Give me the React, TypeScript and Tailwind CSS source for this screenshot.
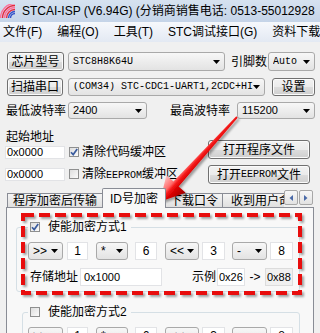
import React from "react";

function Caret() {
  return (
    <svg width="7" height="4" viewBox="0 0 7 4" className="shrink-0">
      <path d="M0 0H7L3.5 4Z" fill="#000" />
    </svg>
  );
}

function Btn({ className = "", children }: { className?: string; children: React.ReactNode }) {
  return (
    <div
      className={`flex items-center justify-center whitespace-nowrap rounded-[3px] border border-[#707070] bg-[linear-gradient(#f2f2f2_0%,#ebebeb_50%,#dddddd_51%,#cfcfcf_100%)] shadow-[inset_0_0_0_1px_#fbfbfb] ${className}`}
    >
      {children}
    </div>
  );
}

function Combo({
  className = "",
  textClass = "",
  children,
}: {
  className?: string;
  textClass?: string;
  children: React.ReactNode;
}) {
  return (
    <div
      className={`flex items-center rounded-[3px] border border-[#a9a9a9] bg-[linear-gradient(#f7f7f7,#e3e3e3)] pl-[4px] pr-[4px] ${className}`}
    >
      <div className={`min-w-0 flex-1 overflow-hidden whitespace-nowrap ${textClass}`}>{children}</div>
      <Caret />
    </div>
  );
}

function TB({ className = "", children }: { className?: string; children?: React.ReactNode }) {
  return (
    <div className={`flex items-center whitespace-nowrap border border-[#e2e3e6] bg-white ${className}`}>
      {children}
    </div>
  );
}

function CB({ checked = false }: { checked?: boolean }) {
  return (
    <div className="flex h-[10px] w-[10px] shrink-0 items-center justify-center border border-[#8e8f8f] bg-[linear-gradient(135deg,#dedede,#fbfbfb)]">
      {checked && (
        <svg width="8" height="8" viewBox="0 0 8 8">
          <path d="M1 4.2L3.2 6.6L7.2 1" fill="none" stroke="#3a5c9e" strokeWidth="1.7" />
        </svg>
      )}
    </div>
  );
}

function AppIcon() {
  return (
    <svg width="15" height="14" viewBox="0 0 15 14" className="shrink-0">
      <path d="M0.5 14A14.5 14.5 0 0 1 15 -0.5" fill="none" stroke="#ff6f9a" strokeWidth="1.4" />
      <path d="M2.5 14A12.5 12.5 0 0 1 15 1.5" fill="none" stroke="#e8283c" strokeWidth="1.4" />
      <path d="M4.5 14A10.5 10.5 0 0 1 15 3.5" fill="none" stroke="#ff6f9a" strokeWidth="1.4" />
      <path d="M6.5 14A8.5 8.5 0 0 1 15 5.5" fill="none" stroke="#e8283c" strokeWidth="1.4" />
      <path d="M8.5 14A6.5 6.5 0 0 1 15 7.5" fill="none" stroke="#3552c8" strokeWidth="1.4" />
      <path d="M10.5 14A4.5 4.5 0 0 1 15 9.5" fill="none" stroke="#3552c8" strokeWidth="1.4" />
    </svg>
  );
}

function ArrowBtn({ dir }: { dir: "l" | "r" }) {
  return (
    <div className="flex h-[15px] w-[14px] items-center justify-center rounded-[2px] border border-[#a7a7a7] bg-[linear-gradient(#f7f7f7,#e2e2e2)]">
      <svg width="4" height="6" viewBox="0 0 4 6">
        {dir === "l" ? <path d="M4 0L0.5 3L4 6Z" fill="#4a6aa8" /> : <path d="M0 0L3.5 3L0 6Z" fill="#4a6aa8" />}
      </svg>
    </div>
  );
}

function CipherRow({ pl }: { pl: string }) {
  return (
    <div className={`flex h-[18px] items-stretch ${pl}`}>
      <Combo className="w-[35px]" textClass="text-[12px]">&gt;&gt;</Combo>
      <TB className="ml-[4px] w-[21px] justify-center text-[12px]">1</TB>
      <Combo className="ml-[8px] w-[32px]" textClass="text-[12px]">*</Combo>
      <TB className="ml-[7px] w-[22px] justify-center text-[12px]">6</TB>
      <Combo className="ml-[8px] w-[34px]" textClass="text-[12px]">&lt;&lt;</Combo>
      <TB className="ml-[3px] w-[23px] justify-center text-[12px]">3</TB>
      <Combo className="ml-[7px] w-[35px]" textClass="text-[12px]">-</Combo>
      <TB className="ml-[3px] w-[23px] justify-center text-[12px]">8</TB>
    </div>
  );
}

const MONO = "font-['Liberation_Mono','Noto_Sans_CJK_SC',monospace] text-[10px]";

export default function App() {
  return (
    <div className="relative h-[333px] w-[320px] overflow-hidden bg-[#f0f0f0] font-['Liberation_Sans','Noto_Sans_CJK_SC',sans-serif] text-[12px] leading-none text-black">
      {/* Title bar */}
      <div className="flex h-[22px] items-center whitespace-nowrap bg-[linear-gradient(#d6e2f0,#c5d4e8)]">
        <AppIcon />
        <span className="ml-[7px] text-[12px]">STCAI-ISP (V6.94G) (分销商销售电话: 0513-55012928</span>
      </div>

      {/* Menu bar */}
      <div className="flex h-[20px] items-center gap-[15px] whitespace-nowrap bg-[linear-gradient(#f6f8fc,#e3e9f3)] pl-[3px]">
        <span>文件(F)</span>
        <span>编程(O)</span>
        <span>工具(T)</span>
        <span>STC调试接口(G)</span>
        <span>资料下载(D)</span>
      </div>

      {/* Row 1 */}
      <div className="mt-[10px] flex h-[19px] items-stretch pl-[7px]">
        <Btn className="w-[57px]">芯片型号</Btn>
        <Combo className="ml-[4px] w-[157px]" textClass={MONO}>
          STC8H8K64U
        </Combo>
        <div className="ml-[6px] flex w-[37px] items-center">引脚数</div>
        <Combo className="w-[47px]" textClass={MONO}>
          Auto
        </Combo>
      </div>

      {/* Row 2 */}
      <div className="mt-[7px] flex h-[18px] items-stretch pl-[7px]">
        <Btn className="w-[56px]">扫描串口</Btn>
        <Combo className="ml-[5px] w-[197px]" textClass={MONO}>
          (COM34) STC-CDC1-UART1,2CDC+HID
        </Combo>
        <Btn className="ml-[7px] w-[43px]">设置</Btn>
      </div>

      {/* Row 3 */}
      <div className="mt-[6px] flex h-[17px] items-stretch pl-[6px]">
        <div className="flex w-[62px] items-center">最低波特率</div>
        <Combo className="w-[79px]" textClass="text-[11px]">
          2400
        </Combo>
        <div className="ml-[23px] flex w-[60px] items-center">最高波特率</div>
        <Combo className="ml-[7px] w-[78px]" textClass="text-[11px]">
          115200
        </Combo>
      </div>

      {/* Address / buffer / files */}
      <div className="mt-[11px] flex">
        <div className="w-[208px] pl-[5px]">
          <div className="ml-[1px] flex h-[14px] items-center">起始地址</div>
          <div className="mt-[1px] flex h-[14px] items-center">
            <TB className="h-[13px] w-[60px] pl-[1px] text-[11px]">0x0000</TB>
            <div className="ml-[4px]">
              <CB checked />
            </div>
            <span className="ml-[3px] whitespace-nowrap">清除代码缓冲区</span>
          </div>
          <div className="mt-[8px] flex h-[14px] items-center">
            <TB className="h-[13px] w-[60px] pl-[1px] text-[11px]">0x0000</TB>
            <div className="ml-[4px]">
              <CB />
            </div>
            <span className="ml-[3px] whitespace-nowrap">
              清除<span className={MONO}>EEPROM</span>缓冲区
            </span>
          </div>
        </div>
        <div className="pt-[10px]">
          <Btn className="h-[19px] w-[102px]">打开程序文件</Btn>
          <Btn className="mt-[6px] h-[19px] w-[102px]">
            打开<span className={MONO}>EEPROM</span>文件
          </Btn>
        </div>
      </div>

      {/* Tab strip */}
      <div className="mt-[4px] flex h-[19px] items-end pl-[7px]">
        <div className="flex h-[14px] w-[96px] items-center justify-center whitespace-nowrap border-l border-r border-t border-[#898c95] bg-[linear-gradient(#f4f4f4,#e0e0e0)]">
          程序加密后传输
        </div>
        <div className="relative z-10 -mb-[1px] -ml-[1px] flex h-[20px] w-[64px] items-center justify-center whitespace-nowrap rounded-t-[2px] border-l border-r border-t border-[#898c95] bg-[#f8f8f8]">
          ID号加密
        </div>
        <div className="-ml-[1px] flex h-[14px] w-[58px] items-center justify-center whitespace-nowrap border-l border-r border-t border-[#898c95] bg-[linear-gradient(#f4f4f4,#e0e0e0)]">
          下载口令
        </div>
        <div className="-ml-[1px] flex h-[14px] w-[62px] items-center overflow-hidden whitespace-nowrap border-l border-t border-[#898c95] bg-[linear-gradient(#f4f4f4,#e0e0e0)] pl-[8px]">
          收到用户命令
        </div>
        <div className="mb-[2px] flex gap-[1px] self-end">
          <ArrowBtn dir="l" />
          <ArrowBtn dir="r" />
        </div>
      </div>

      {/* Tab panel */}
      <div className="ml-[6px] h-[140px] w-[308px] border border-[#898c95] bg-[#f8f8f8]">
        {/* Group 1 */}
        <div className="ml-[9px] mt-[19px] w-[284px] rounded-[3px] border border-[#d5dfe5] pb-[5px]">
          <div className="-mt-[8px] ml-[11px] flex h-[14px] w-fit items-center bg-[#f8f8f8] px-[2px]">
            <CB checked />
            <span className="ml-[8px] pr-[2px]">使能加密方式1</span>
          </div>
          <div className="mt-[8px]">
            <CipherRow pl="pl-[11px]" />
          </div>
          <div className="mt-[8px] flex h-[18px] items-stretch pl-[13px]">
            <div className="flex w-[48px] items-center">存储地址</div>
            <TB className="ml-[2px] w-[82px] pl-[3px] text-[11px]">0x1000</TB>
            <div className="ml-[30px] flex w-[24px] items-center">示例</div>
            <TB className="ml-[1px] w-[28px] pl-[1px] text-[11px]">0x26</TB>
            <div className="ml-[2px] flex w-[16px] items-center justify-center">-&gt;</div>
            <div className="ml-[2px] flex w-[28px] items-center border border-[#dcdcdc] bg-[#f0f0f0] pl-[1px] text-[11px]">
              0x88
            </div>
          </div>
        </div>

        {/* Group 2 */}
        <div className="ml-[15px] mt-[20px] h-[60px] w-[278px] rounded-[3px] border border-[#d5dfe5]">
          <div className="-mt-[8px] ml-[5px] flex h-[14px] w-fit items-center bg-[#f8f8f8] px-[2px]">
            <CB />
            <span className="ml-[8px] pr-[2px]">使能加密方式2</span>
          </div>
          <div className="mt-[8px]">
            <CipherRow pl="pl-[5px]" />
          </div>
        </div>
      </div>

      {/* Annotation overlay: red dashed frame and arrow */}
      <svg
        className="pointer-events-none absolute left-0 top-0"
        width="320"
        height="333"
        viewBox="0 0 320 333"
      >
        <defs>
          <filter id="sh" x="-10%" y="-10%" width="130%" height="130%">
            <feDropShadow dx="2" dy="2" stdDeviation="1.3" floodColor="#000" floodOpacity="0.35" />
          </filter>
          <linearGradient id="ag" gradientUnits="userSpaceOnUse" x1="190.4" y1="148.3" x2="209.6" y2="165.7">
            <stop offset="0" stopColor="#ffc8c8" />
            <stop offset="0.38" stopColor="#ff6a6a" />
            <stop offset="0.5" stopColor="#f51a1a" />
            <stop offset="0.65" stopColor="#d80000" />
            <stop offset="1" stopColor="#a00000" />
          </linearGradient>
        </defs>
        <rect
          x="23"
          y="215"
          width="277"
          height="78"
          fill="none"
          stroke="#e8080c"
          strokeWidth="4"
          strokeDasharray="11 5"
          filter="url(#sh)"
        />
        <polygon
          points="237.7,117.7 178.6,186.4 185.6,192.7 159.8,201.7 166.4,175.3 173.4,181.6 236.3,116.3"
          fill="url(#ag)"
          filter="url(#sh)"
        />
      </svg>
    </div>
  );
}
